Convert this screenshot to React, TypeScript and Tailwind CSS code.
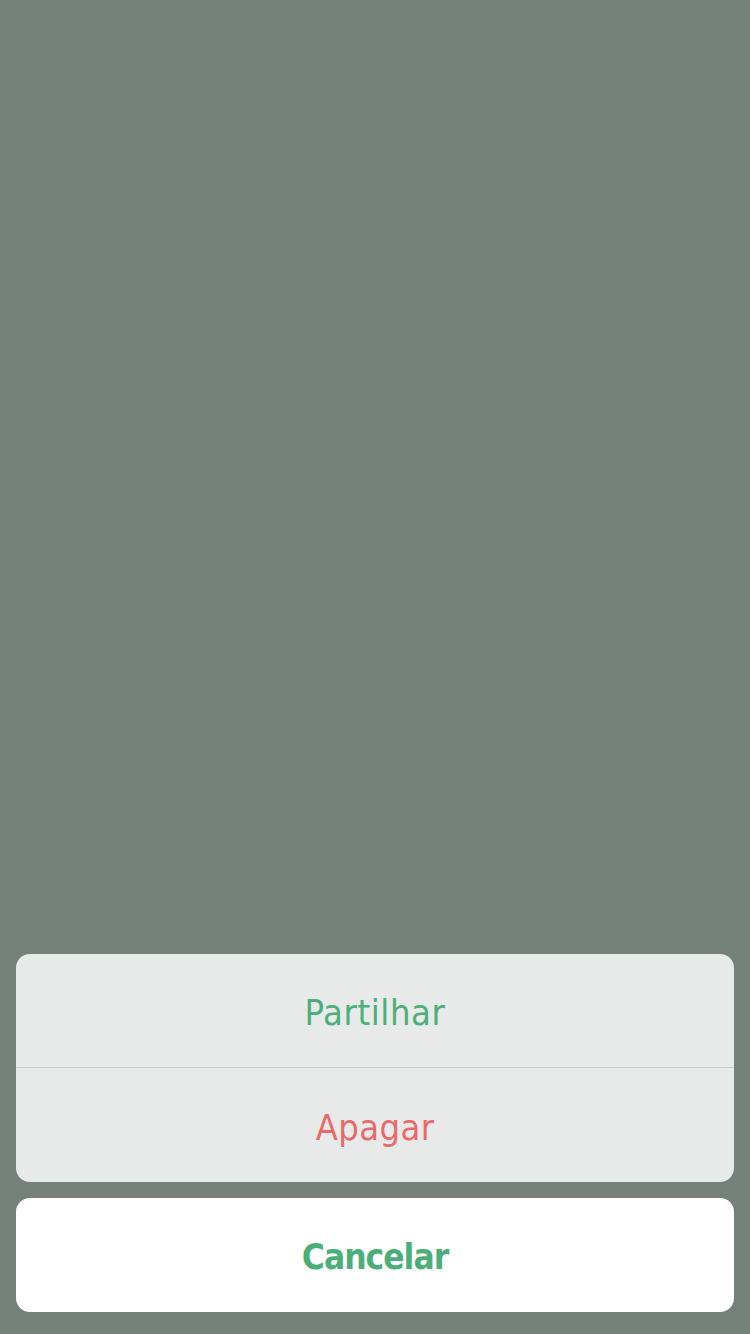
export default function App() {
  const font = { fontFamily: '"DejaVu Sans", "Liberation Sans", sans-serif' };
  return (
    <div className="w-[750px] h-[1334px] bg-[#748079] flex flex-col justify-end px-4 pb-[22px]" style={font}>
      <div className="rounded-[14px] bg-[#e8eaea] overflow-hidden">
        <div className="h-[113px] pt-[5px] flex items-center justify-center text-[36px] text-[#4caf7a] [font-stretch:condensed] tracking-[0.6px]">
          Partilhar
        </div>
        <div className="h-px bg-[#c9cbcb]" />
        <div className="h-[114px] pt-[5px] flex items-center justify-center text-[36px] text-[#e86a6a] [font-stretch:condensed] tracking-[0.4px]">
          Apagar
        </div>
      </div>
      <div className="mt-4 h-[114px] pt-[4px] rounded-[14px] bg-white flex items-center justify-center text-[35px] font-bold text-[#4caf7a] [font-stretch:condensed] tracking-[-1px]">
        Cancelar
      </div>
    </div>
  );
}
